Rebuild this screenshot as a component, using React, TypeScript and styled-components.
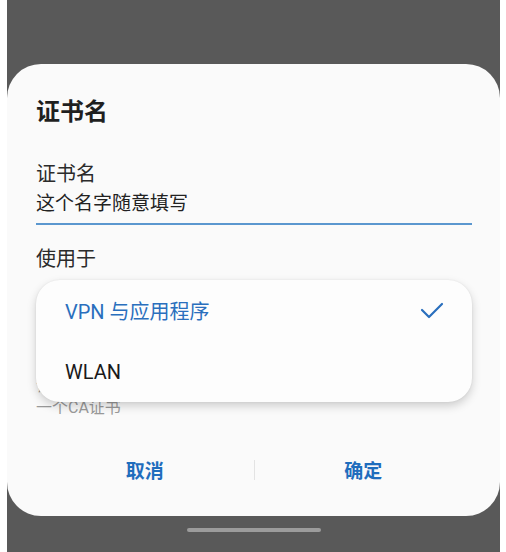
import styled, {createGlobalStyle} from "styled-components";

const GlobalStyle = createGlobalStyle`
    html, body {
        margin: 0;
        padding: 0;
        background: #ffffff;
    }
    body {
        font-family: "Roboto", "Noto Sans CJK SC", sans-serif;
    }
`;

export default function App() {
    return (
        <>
            <GlobalStyle/>
            <Screen>
                <Dialog>
                    <Title>证书名</Title>
                    <Field>
                        <Label>证书名</Label>
                        <Value>这个名字随意填写</Value>
                    </Field>
                    <Label $top={20}>使用于</Label>
                    <Hint>
                        <span>该证书包包含：</span>
                        <span>一个CA证书</span>
                    </Hint>
                    <Actions>
                        <ActionButton>取消</ActionButton>
                        <Divider/>
                        <ActionButton>确定</ActionButton>
                    </Actions>

                    <Menu>
                        <MenuItem $selected>
                            VPN 与应用程序
                            <svg width="24" height="18" viewBox="0 0 24 18" fill="none">
                                <polyline points="2,8 9,15 22,2" stroke="#2a6fbd" strokeWidth="2.2"
                                          strokeLinecap="round" strokeLinejoin="round"/>
                            </svg>
                        </MenuItem>
                        <MenuItem>WLAN</MenuItem>
                    </Menu>
                </Dialog>
                <HomeBar/>
            </Screen>
        </>
    );
}

const Screen = styled.div`
    margin: 0 6px 0 7px;
    height: 552px;
    background: #595959;
    display: flex;
    flex-direction: column;
    align-items: center;
    padding-top: 64px;
    box-sizing: border-box;
    overflow: hidden;
`;

const Dialog = styled.div`
    position: relative;
    align-self: stretch;
    height: 452px;
    background: #fafafa;
    border-radius: 34px;
    padding: 33px 28px 0 29px;
    box-sizing: border-box;
    display: flex;
    flex-direction: column;
`;

const Title = styled.h1`
    margin: 0;
    font-size: 24px;
    line-height: 30px;
    font-weight: 700;
    color: #1f1f1f;
`;

const Field = styled.div`
    margin-top: 33px;
    display: flex;
    flex-direction: column;
    border-bottom: 2px solid #5b97cf;
    padding-bottom: 6px;
`;

const Label = styled.div<{ $top?: number }>`
    margin-top: ${p => p.$top ?? 0}px;
    font-size: 20px;
    line-height: 28px;
    color: #2b2b2b;
`;

const Value = styled.div`
    margin-top: 3px;
    font-size: 19px;
    line-height: 26px;
    color: #222;
`;

const Hint = styled.div`
    margin-top: 102px;
    display: flex;
    flex-direction: column;
    font-size: 16px;
    line-height: 22px;
    color: #9a9a9a;
`;

const Actions = styled.div`
    margin-top: 38px;
    display: flex;
    align-items: center;
`;

const ActionButton = styled.button`
    flex: 1;
    border: none;
    background: none;
    padding: 0;
    font-family: "Noto Sans CJK SC", sans-serif;
    font-size: 19px;
    line-height: 26px;
    font-weight: 700;
    color: #1f6dbd;
`;

const Divider = styled.div`
    width: 1px;
    height: 20px;
    background: #e3e3e3;
`;

const Menu = styled.div`
    position: absolute;
    left: 29px;
    top: 216px;
    width: 436px;
    height: 122px;
    background: #fdfdfd;
    border-radius: 24px;
    box-shadow: 0 4px 10px rgba(0, 0, 0, 0.18), 0 0 2px rgba(0, 0, 0, 0.08);
    display: flex;
    flex-direction: column;
    justify-content: center;
`;

const MenuItem = styled.div<{ $selected?: boolean }>`
    height: 61px;
    padding: 0 28px 0 29px;
    display: flex;
    align-items: center;
    justify-content: space-between;
    font-size: 20px;
    color: ${p => (p.$selected ? "#2a6fbd" : "#1a1a1a")};
`;

const HomeBar = styled.div`
    margin-top: 12px;
    width: 134px;
    height: 4px;
    border-radius: 2px;
    background: #9c9c9c;
`;
